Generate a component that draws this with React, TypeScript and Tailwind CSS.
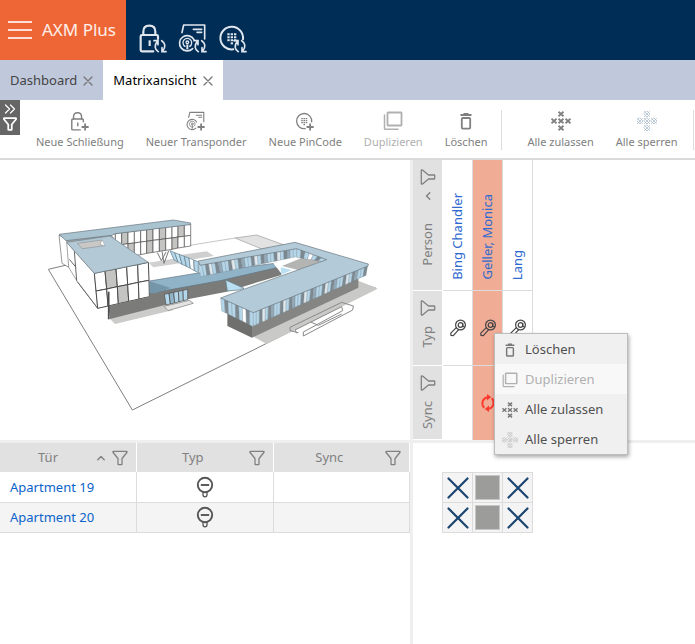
import React from 'react';

type IconProps = { className?: string };

const stroke = {
  fill: 'none',
  stroke: 'currentColor',
  strokeLinecap: 'round' as const,
  strokeLinejoin: 'round' as const,
};

/* Small badge in the lower right corner of the big toolbar glyphs */
const Badge = ({ kind }: { kind: 'sync' | 'plus' }) =>
  kind === 'sync' ? (
    <g strokeWidth={5} strokeLinejoin="miter">
      <path d="M61 86C50 80 48 67 58 55M48 53h12v12" />
      <path d="M71 53c11 6 13 20 3 31M84 86H72V74" />
    </g>
  ) : (
    <path d="M68 56v32M52 72h32" strokeWidth={8} strokeLinecap="butt" />
  );

const LockGlyph = ({ kind, className }: IconProps & { kind: 'sync' | 'plus' }) => (
  <svg viewBox="0 0 90 90" className={className} {...stroke} strokeWidth={6.5} aria-hidden="true">
    <path d="M46 85H12q-4 0-4-4V40q0-4 4-4h44q4 0 4 4v8" />
    <path d="M16 36V26C16 14 23 8 34 8s18 6 18 18v10" />
    <path d="M35 52v17" strokeLinecap="butt" />
    <Badge kind={kind} />
  </svg>
);

const TransponderGlyph = ({ kind, className }: IconProps & { kind: 'sync' | 'plus' }) => (
  <svg viewBox="0 0 90 90" className={className} {...stroke} strokeWidth={5} aria-hidden="true">
    <path d="M12 29L17 6h63v42" />
    <path d="M46 19h25M57 28h14" />
    <path d="M48 50A23 23 0 1 0 44 77" />
    <path d="M21 70a13 13 0 1 1 14 0" strokeWidth={4} />
    <circle cx="28" cy="58" r="4" strokeWidth={4} />
    <path d="M28 64v15" strokeWidth={6} strokeLinecap="butt" />
    <Badge kind={kind} />
  </svg>
);

const PinGlyph = ({ kind, className }: IconProps & { kind: 'sync' | 'plus' }) => (
  <svg viewBox="0 0 90 90" className={className} {...stroke} strokeWidth={6} aria-hidden="true">
    <path d="M75 49A34 34 0 1 0 46 79" />
    {[34, 43, 52].map((y) => (
      <path key={y} d={`M28 ${y}h7M38 ${y}h7M48 ${y}h7`} strokeLinecap="butt" />
    ))}
    <path d="M38 61h7" strokeLinecap="butt" />
    <Badge kind={kind} />
  </svg>
);

const DuplicateGlyph = ({ className }: IconProps) => (
  <svg viewBox="0 0 20 20" className={className} {...stroke} strokeWidth={1.5} aria-hidden="true">
    <rect x="4.5" y="1.5" width="14" height="13" rx="0.5" strokeWidth={1.8} />
    <path d="M1.5 4v13.5q0 .8.8.8H15" />
  </svg>
);

const TrashGlyph = ({ className }: IconProps) => (
  <svg viewBox="0 0 20 20" className={className} {...stroke} aria-hidden="true">
    <path d="M4.5 4h11M7.500 3h5" strokeWidth={2} strokeLinecap="butt" />
    <rect x="5.8" y="7" width="8.4" height="10.6" rx="1" strokeWidth={1.8} />
  </svg>
);

const crossCells = [[10, 3], [3, 10], [10, 10], [17, 10], [10, 17]];

const AllowGlyph = ({ className }: IconProps) => (
  <svg viewBox="0 0 20 20" className={className} {...stroke} strokeWidth={1.8} strokeLinecap="butt" aria-hidden="true">
    {crossCells.map(([x, y]) => (
      <path key={`${x}-${y}`} d={`M${x - 2.5} ${y - 2.2}l5 4.400m0-4.400l-5 4.400`} />
    ))}
  </svg>
);

const BlockGlyph = ({ className }: IconProps) => (
  <svg viewBox="0 0 20 20" className={className} {...stroke} strokeWidth={0.8} aria-hidden="true">
    {crossCells.map(([x, y]) => (
      <g key={`${x}-${y}`}>
        <path d={`M${x - 2.5} ${y - 2.5}l5 5m0-5l-5 5`} />
        <path d={`M${x} ${y - 3}l3 3-3 3-3-3z`} />
      </g>
    ))}
  </svg>
);

const FilterGlyph = ({ className, width = 1.3 }: IconProps & { width?: number }) => (
  <svg viewBox="0 0 16 16" className={className} {...stroke} strokeWidth={width} aria-hidden="true">
    <path d="M1.500 1.300h13c.6 0 .8.6.4 1.200L10 8.500v5.800q0 .4-.5.4h-3q-.5 0-.5-.4V8.500L1.100 2.500c-.4-.6-.2-1.200.4-1.200z" />
  </svg>
);

const SortGlyph = ({ className }: IconProps) => (
  <svg viewBox="0 0 10 10" className={className} {...stroke} strokeWidth={1.4} aria-hidden="true">
    <path d="M1.800 6.800L5 3.500L8.200 6.800" />
  </svg>
);

const CloseGlyph = ({ className }: IconProps) => (
  <svg viewBox="0 0 10 10" className={className} {...stroke} strokeWidth={1.3} aria-hidden="true">
    <path d="M1 1l8 8M9 1L1 9" />
  </svg>
);

const KeyGlyph = ({ className }: IconProps) => (
  <svg viewBox="0 0 16 18" className={className} {...stroke} strokeWidth={1.2} aria-hidden="true">
    <circle cx="10.500" cy="6" r="4.900" />
    <circle cx="10.500" cy="6" r="2.300" />
    <path d="M12.800 4.500v2.700l1.800.8" />
    <path d="M6.300 8.600L.8 14.200l.2 2.300 2.300.2 5.400-6" />
  </svg>
);

const SyncGlyph = ({ className }: IconProps) => (
  <svg viewBox="0 0 16 18" className={className} {...stroke} strokeWidth={1.9} strokeLinecap="butt" aria-hidden="true">
    <path d="M4.300 13.800A6.200 6.200 0 0 1 7.500 3.200" />
    <path d="M11.700 4.200A6.200 6.200 0 0 1 8.500 14.800" />
    <path d="M7 0l4.200 3L7 6.400zM9 18l-4.200-3L9 11.600z" fill="currentColor" stroke="none" />
  </svg>
);

const CylinderGlyph = ({ className }: IconProps) => (
  <svg viewBox="0 0 18 22" className={className} {...stroke} strokeWidth={1.9} aria-hidden="true">
    <circle cx="9" cy="9" r="7.200" />
    <path d="M4.800 9h8.400" strokeLinecap="butt" />
    <path d="M7 16.500v2.300a2 2 0 0 0 4 0v-2.300" strokeWidth={1.3} />
  </svg>
);

type Pt = [number, number];

const mix = (a: Pt, b: Pt, t: number): Pt => [a[0] + (b[0] - a[0]) * t, a[1] + (b[1] - a[1]) * t];
const pts = (list: Pt[]) => list.map((p) => p.map((n) => Math.round(n)).join(',')).join(' ');

/* A wall cut into vertical panels, corners given as top left, top right, bottom right, bottom left */
const Facade = ({ corners, fills, line = '#4a4a4a', width = 2 }: { corners: [Pt, Pt, Pt, Pt]; fills: string[]; line?: string; width?: number }) => {
  const [tl, tr, br, bl] = corners;
  return (
    <g stroke={line} strokeWidth={width}>
      {fills.map((fill, i) => {
        const a = i / fills.length;
        const b = (i + 1) / fills.length;
        return <polygon key={i} fill={fill} points={pts([mix(tl, tr, a), mix(tl, tr, b), mix(bl, br, b), mix(bl, br, a)])} />;
      })}
    </g>
  );
};

const W = '#fff';
const G = '#c4c4c2';
const B = '#b4d6ea';
const D = '#7c8991';

const stripes = (n: number) => Array.from({ length: n }, (_, i) => [B, D, '#dfe8ed', B, '#93a9b7', B, D][(i * 3) % 7]);

const Building = () => (
  <svg viewBox="-120 -150 1230 840" className="h-[280px] w-full" role="img" aria-label="Gebäude" strokeLinejoin="round">
    {/* plot */}
    <path d="M80 165L25 178L277 600L640 420L1008 235L960 218" fill="none" stroke="#808080" strokeWidth={3} />
    <path d="M450 106L585 84" stroke="#a8a8a8" strokeWidth={2} />
    <polygon points="585,84 650,75 735,106 668,118" fill="#e2e2e2" stroke="#999" strokeWidth={2} />
    <polygon points="205,322 225,342 400,300 375,275" fill="#cbcbca" />
    <polygon points="640,380 680,402 1013,236 955,212" fill="#c9c9c8" />
    <polygon points="326,158 400,146 420,160 340,172" fill="#d0d0d0" />
    <polygon points="420,135 500,124 522,138 460,148" fill="#cfcfcf" />

    {/* rear wing on the left */}
    <Facade corners={[[170, 78], [452, 42], [452, 76], [170, 114]]} fills={[W, W, W, W, G, W, W, W, G, W, G, W, W, G, W]} />
    <Facade corners={[[170, 114], [452, 76], [452, 108], [170, 156]]} fills={[W, W, W, W, W, G, W, W, G, W, G, W, G, W, W]} />
    <polygon points="57,76 90,90 86,172 66,160" fill="#fff" stroke="#666" strokeWidth={2} />
    <polygon points="76,90 215,74 230,98 88,112" fill="#a6a6a4" />
    <polygon points="57,73 400,30 452,39 450,44 225,71 215,76 78,92" fill="#a9c3d1" stroke="#66747c" strokeWidth={2} />
    <path d="M352 128l12 24 14-26M366 124l6 36 14-38" fill="none" stroke="#777" strokeWidth={3} />

    {/* front block */}
    <polygon points="80,97 163,190 173,295 112,215 86,172" fill="#fff" stroke="#777" strokeWidth={2} />
    <path d="M88 148L108 172M103 124L110 212M112 215L173 295" stroke="#666" strokeWidth={3} fill="none" />
    <Facade corners={[[163, 190], [325, 157], [327, 211], [168, 243]]} fills={[W, G, W, W, W]} width={3} />
    <Facade corners={[[168, 243], [327, 211], [328, 260], [173, 295]]} fills={[W, W, G, W, W]} width={3} />
    <polygon points="80,97 210,78 325,157 163,190" fill="#b3c9d6" stroke="#71808a" strokeWidth={2} />
    <polygon points="112,100 185,90 195,107 127,116" fill="#c9c8c6" stroke="#8b9499" strokeWidth={2} />
    <path d="M185 90L180 104L195 107" fill="#fff" stroke="#999" strokeWidth={2} />

    {/* low connecting building */}
    <polygon points="205,288 330,260 330,246 722,170 724,195 560,245 443,268 210,327" fill="#7b7b79" />
    <path d="M206 245v83" stroke="#4c4c4c" strokeWidth={5} />
    <polygon points="328,213 475,189 720,158 723,170 540,212 330,250" fill="#90b3c8" stroke="#5d7380" strokeWidth={2} />
    <polygon points="330,214 392,234 346,250 330,250" fill="#7596a9" />
    <Facade corners={[[373, 253], [443, 238], [443, 269], [378, 285]]} fills={[B, '#8fb4c8', B, '#a8cbdd', B]} />
    <polygon points="372,289 448,271 460,280 384,302" fill="#e3e3e2" stroke="#777" strokeWidth={2} />
    <Facade corners={[[390, 122], [475, 155], [475, 188], [402, 150]]} fills={[B, '#c7e5f4', B, B, W, B]} line="#5f7884" />
    <polygon points="557,210 612,235 595,240 562,243" fill="#b9dff2" stroke="#5f7884" strokeWidth={2} />

    {/* courtyard and long wing on the right */}
    <polygon points="700,160 770,138 860,150 780,178 722,188" fill="#fff" />
    <polygon points="726,168 790,142 850,152 775,180" fill="#b4b4b2" />
    <polygon points="722,172 755,180 724,194" fill="#b9dff2" />
    <Facade corners={[[475, 163], [770, 113], [770, 140], [482, 200]]} fills={stripes(30)} line="#78868e" width={1} />
    <Facade corners={[[770, 113], [860, 147], [845, 155], [770, 142]]} fills={[B, D, B, W, B, D, B]} line="#78868e" width={1} />
    <polygon points="562,310 636,345 636,383 562,348" fill="#6f6f6d" />
    <polygon points="636,345 955,205 955,233 636,383" fill="#858583" />
    <Facade corners={[[542, 264], [640, 306], [640, 350], [545, 303]]} fills={[B, D, B, B, D, B, W, D, B]} line="#78868e" width={1} />
    <Facade corners={[[640, 306], [983, 164], [978, 196], [640, 348]]} fills={stripes(38)} line="#78868e" width={1} />
    <polygon
      points="475,153 765,97 985,162 984,168 640,308 542,264 600,242 860,149 770,116 480,166"
      fill="#b3cad8"
      stroke="#66747c"
      strokeWidth={2}
    />

    {/* ramp */}
    <path
      d="M750 352L905 277L940 288L938 300L790 378V366L908 302L905 290L765 360L770 370M750 352V362L775 368M812 336L835 346L905 312"
      fill="none"
      stroke="#8a8a8a"
      strokeWidth={3}
    />
  </svg>
);

const toolbarItems = [
  { label: 'Neue Schließung', icon: <LockGlyph kind="plus" className="size-5" /> },
  { label: 'Neuer Transponder', icon: <TransponderGlyph kind="plus" className="size-5" /> },
  { label: 'Neue PinCode', icon: <PinGlyph kind="plus" className="size-5" /> },
  { label: 'Duplizieren', icon: <DuplicateGlyph className="size-5" />, disabled: true },
  { label: 'Löschen', icon: <TrashGlyph className="size-5" /> },
];

const matrixItems = [
  { label: 'Alle zulassen', icon: <AllowGlyph className="size-5" /> },
  { label: 'Alle sperren', icon: <BlockGlyph className="size-5 text-[#a9bccb]" /> },
];

const menuItems = [
  { label: 'Löschen', icon: <TrashGlyph className="size-4" /> },
  { label: 'Duplizieren', icon: <DuplicateGlyph className="size-4" />, disabled: true },
  { label: 'Alle zulassen', icon: <AllowGlyph className="size-4" /> },
  { label: 'Alle sperren', icon: <BlockGlyph className="size-4 text-[#bbb]" /> },
];

const persons = [
  { name: 'Bing Chandler', selected: false },
  { name: 'Geller, Monica', selected: true },
  { name: 'Lang', selected: false },
];

const doors = ['Apartment 19', 'Apartment 20'];

const ToolbarButton: React.FC<{ label: string; icon: React.ReactNode; disabled?: boolean }> = ({ label, icon, disabled }) => (
  <button
    type="button"
    disabled={disabled}
    className={`flex flex-col items-center gap-[3px] whitespace-nowrap px-[11px] text-[11px] leading-4 ${disabled ? 'text-[#b0b0b0]' : 'text-[#808080]'}`}
  >
    {icon}
    <span>{label}</span>
  </button>
);

const AppHeader = () => (
  <header className="flex h-[60px] bg-[#002d56]">
    <div className="flex items-center gap-[10px] bg-[#ee6636] pl-2 pr-[10px] text-white">
      <button type="button" aria-label="Menü" className="flex w-6 flex-col gap-[6px]">
        <span className="h-[2px] bg-white/80" />
        <span className="h-[2px] bg-white/80" />
        <span className="h-[2px] bg-white/80" />
      </button>
      <span className="whitespace-nowrap text-[17px] text-white/90">AXM Plus</span>
    </div>
    <div className="flex items-end gap-[10px] px-3 pb-[7px] text-[#dfe6ee]">
      <button type="button" aria-label="Schließung synchronisieren">
        <LockGlyph kind="sync" className="size-[30px]" />
      </button>
      <button type="button" aria-label="Transponder synchronisieren">
        <TransponderGlyph kind="sync" className="size-[30px]" />
      </button>
      <button type="button" aria-label="PinCode synchronisieren">
        <PinGlyph kind="sync" className="size-[30px]" />
      </button>
    </div>
  </header>
);

const TabBar = () => (
  <nav className="flex h-10 bg-[#c0c8dc] text-[13px]">
    {['Dashboard', 'Matrixansicht'].map((tab) => (
      <div
        key={tab}
        className={`flex items-center gap-[6px] px-[10px] pt-px ${tab === 'Matrixansicht' ? 'bg-white text-black' : 'text-[#444]'}`}
      >
        <button type="button">{tab}</button>
        <button type="button" aria-label={`${tab} schließen`} className="text-[#777]">
          <CloseGlyph className="size-[10px]" />
        </button>
      </div>
    ))}
  </nav>
);

const Toolbar = () => (
  <div className="flex h-[60px] items-start border-b-2 border-[#dadada]">
    <button type="button" aria-label="Filter einblenden" className="flex h-[35px] w-5 shrink-0 flex-col items-center gap-[3px] bg-[#666] pt-1 text-white">
      <svg viewBox="0 0 12 10" className="h-[10px] w-3" {...stroke} strokeWidth={1.2} aria-hidden="true">
        <path d="M1.500 1L5.500 5L1.500 9M6.500 1L10.500 5L6.500 9" />
      </svg>
      <FilterGlyph className="size-[14px]" width={2} />
    </button>
    <div className="flex items-start pl-[5px] pt-[11px]">
      {toolbarItems.map((item) => (
        <ToolbarButton key={item.label} {...item} />
      ))}
    </div>
    <div className="ml-[3px] mt-[10px] flex h-10 shrink-0 items-start border-x border-[#dcdcdc] pl-[14px] pr-1 pt-px">
      {matrixItems.map((item) => (
        <ToolbarButton key={item.label} {...item} />
      ))}
    </div>
  </div>
);

const DoorTable = () => (
  <table className="w-full table-fixed border-collapse text-[13px]">
    <thead>
      <tr className="h-[29px] bg-[#e1e1e1] text-[#808080]">
        {['Tür', 'Typ', 'Sync'].map((title) => (
          <th key={title} className="border-r border-white p-0 font-normal">
            <div className="flex items-center pr-2">
              <span className="flex-1">{title}</span>
              {title === 'Tür' && <SortGlyph className="mr-[6px] size-[10px]" />}
              <button type="button" aria-label={`${title} filtern`}>
                <FilterGlyph className="size-4" />
              </button>
            </div>
          </th>
        ))}
      </tr>
    </thead>
    <tbody>
      {doors.map((door) => (
        <tr key={door} className="h-[30px] even:bg-[#f4f4f4]">
          <td className="border-b border-r border-[#dcdcdc] px-[10px] pb-0 pt-[2px]">
            <a href="#" className="text-[#0a63c9]">{door}</a>
          </td>
          <td className="border-b border-r border-[#dcdcdc] p-0 text-[#555]">
            <CylinderGlyph className="mx-auto h-[22px] w-[18px]" />
          </td>
          <td className="border-b border-r border-[#dcdcdc] p-0" />
        </tr>
      ))}
    </tbody>
  </table>
);

const RowHead = ({ title, sorted = false }: { title: string; sorted?: boolean }) => (
  <th className="w-[30px] border-b border-r border-white bg-[#e1e1e1] p-0 align-top font-normal text-[#808080]">
    <div className="flex flex-col items-center pt-[9px]">
      <button type="button" aria-label={`${title} filtern`}>
        <FilterGlyph className="size-4 -rotate-90" />
      </button>
      {sorted && <SortGlyph className="mb-3 mt-[6px] size-[10px] -rotate-90" />}
      <span className="mt-[10px] rotate-180 [writing-mode:vertical-rl]">{title}</span>
    </div>
  </th>
);

const PersonTable = () => (
  <table className="border-separate border-spacing-0 text-[13px]">
    <tbody>
      <tr className="h-[131px]">
        <RowHead title="Person" sorted />
        {persons.map((p) => (
          <td key={p.name} className={`w-[30px] border-b border-r border-[#dcdcdc] p-0 pb-[10px] align-bottom ${p.selected ? 'bg-[#f1ac95]' : ''}`}>
            <div className="flex justify-center">
              <a href="#" className="rotate-180 whitespace-nowrap text-[#2f6ad0] [writing-mode:vertical-rl]">{p.name}</a>
            </div>
          </td>
        ))}
      </tr>
      <tr className="h-[75px]">
        <RowHead title="Typ" />
        {persons.map((p) => (
          <td key={p.name} className={`border-b border-r border-[#dcdcdc] p-0 ${p.selected ? 'bg-[#f1ac95]' : ''}`}>
            <KeyGlyph className="mx-auto h-[18px] w-4 text-[#444]" />
          </td>
        ))}
      </tr>
      <tr className="h-[74px]">
        <RowHead title="Sync" />
        {persons.map((p) => (
          <td key={p.name} className={`border-r border-[#dcdcdc] p-0 ${p.selected ? 'bg-[#f1ac95]' : ''}`}>
            {p.selected && <SyncGlyph className="mx-auto h-[18px] w-4 text-[#fb3b2f]" />}
          </td>
        ))}
      </tr>
    </tbody>
  </table>
);

const RightsTable = () => (
  <table className="ml-[29px] mt-[29px] border-collapse bg-[#f4f4f4]">
    <tbody>
      {doors.map((door) => (
        <tr key={door} className="h-[30px]">
          {persons.map((p) => (
            <td key={p.name} className="w-[30px] border border-[#dcdcdc] p-0">
              {p.selected ? (
                <div className="mx-auto size-[25px] border border-[#c6c6c6] bg-[#9c9c9a]" />
              ) : (
                <svg viewBox="0 0 22 22" className="mx-auto size-[22px] text-[#1b456f]" {...stroke} strokeWidth={2.2} aria-hidden="true">
                  <path d="M1.500 1.500l19 19M20.500 1.500l-19 19" />
                </svg>
              )}
            </td>
          ))}
        </tr>
      ))}
    </tbody>
  </table>
);

const ContextMenu = () => (
  <div role="menu" className="absolute left-[81px] top-[173px] border border-[#bdbdbd] bg-[#f0f0f0] text-[13px] shadow-[1px_2px_4px_rgba(0,0,0,0.35)]">
    {menuItems.map((item) => (
      <button
        key={item.label}
        type="button"
        role="menuitem"
        disabled={item.disabled}
        className={`flex h-[30px] w-full items-center gap-[7px] whitespace-nowrap pl-[7px] pr-6 pt-[2px] ${item.disabled ? 'bg-[#f8f8f8] text-[#b0b0b0]' : 'text-[#505050]'}`}
      >
        <span className={item.disabled ? '' : 'text-[#777]'}>{item.icon}</span>
        {item.label}
      </button>
    ))}
  </div>
);

export default function App() {
  return (
    <div className="flex min-h-screen flex-col bg-white font-['Noto_Sans','Open_Sans',sans-serif]">
      <AppHeader />
      <TabBar />
      <Toolbar />
      <main className="flex flex-1">
        <section className="w-[59%]">
          <div className="h-[283px] border-b-[3px] border-[#efefef]">
            <Building />
          </div>
          <DoorTable />
        </section>
        <section className="relative flex-1 border-l-[3px] border-[#efefef]">
          <div className="h-[283px] border-b-[3px] border-[#efefef]">
            <PersonTable />
          </div>
          <RightsTable />
          <ContextMenu />
        </section>
      </main>
    </div>
  );
}
